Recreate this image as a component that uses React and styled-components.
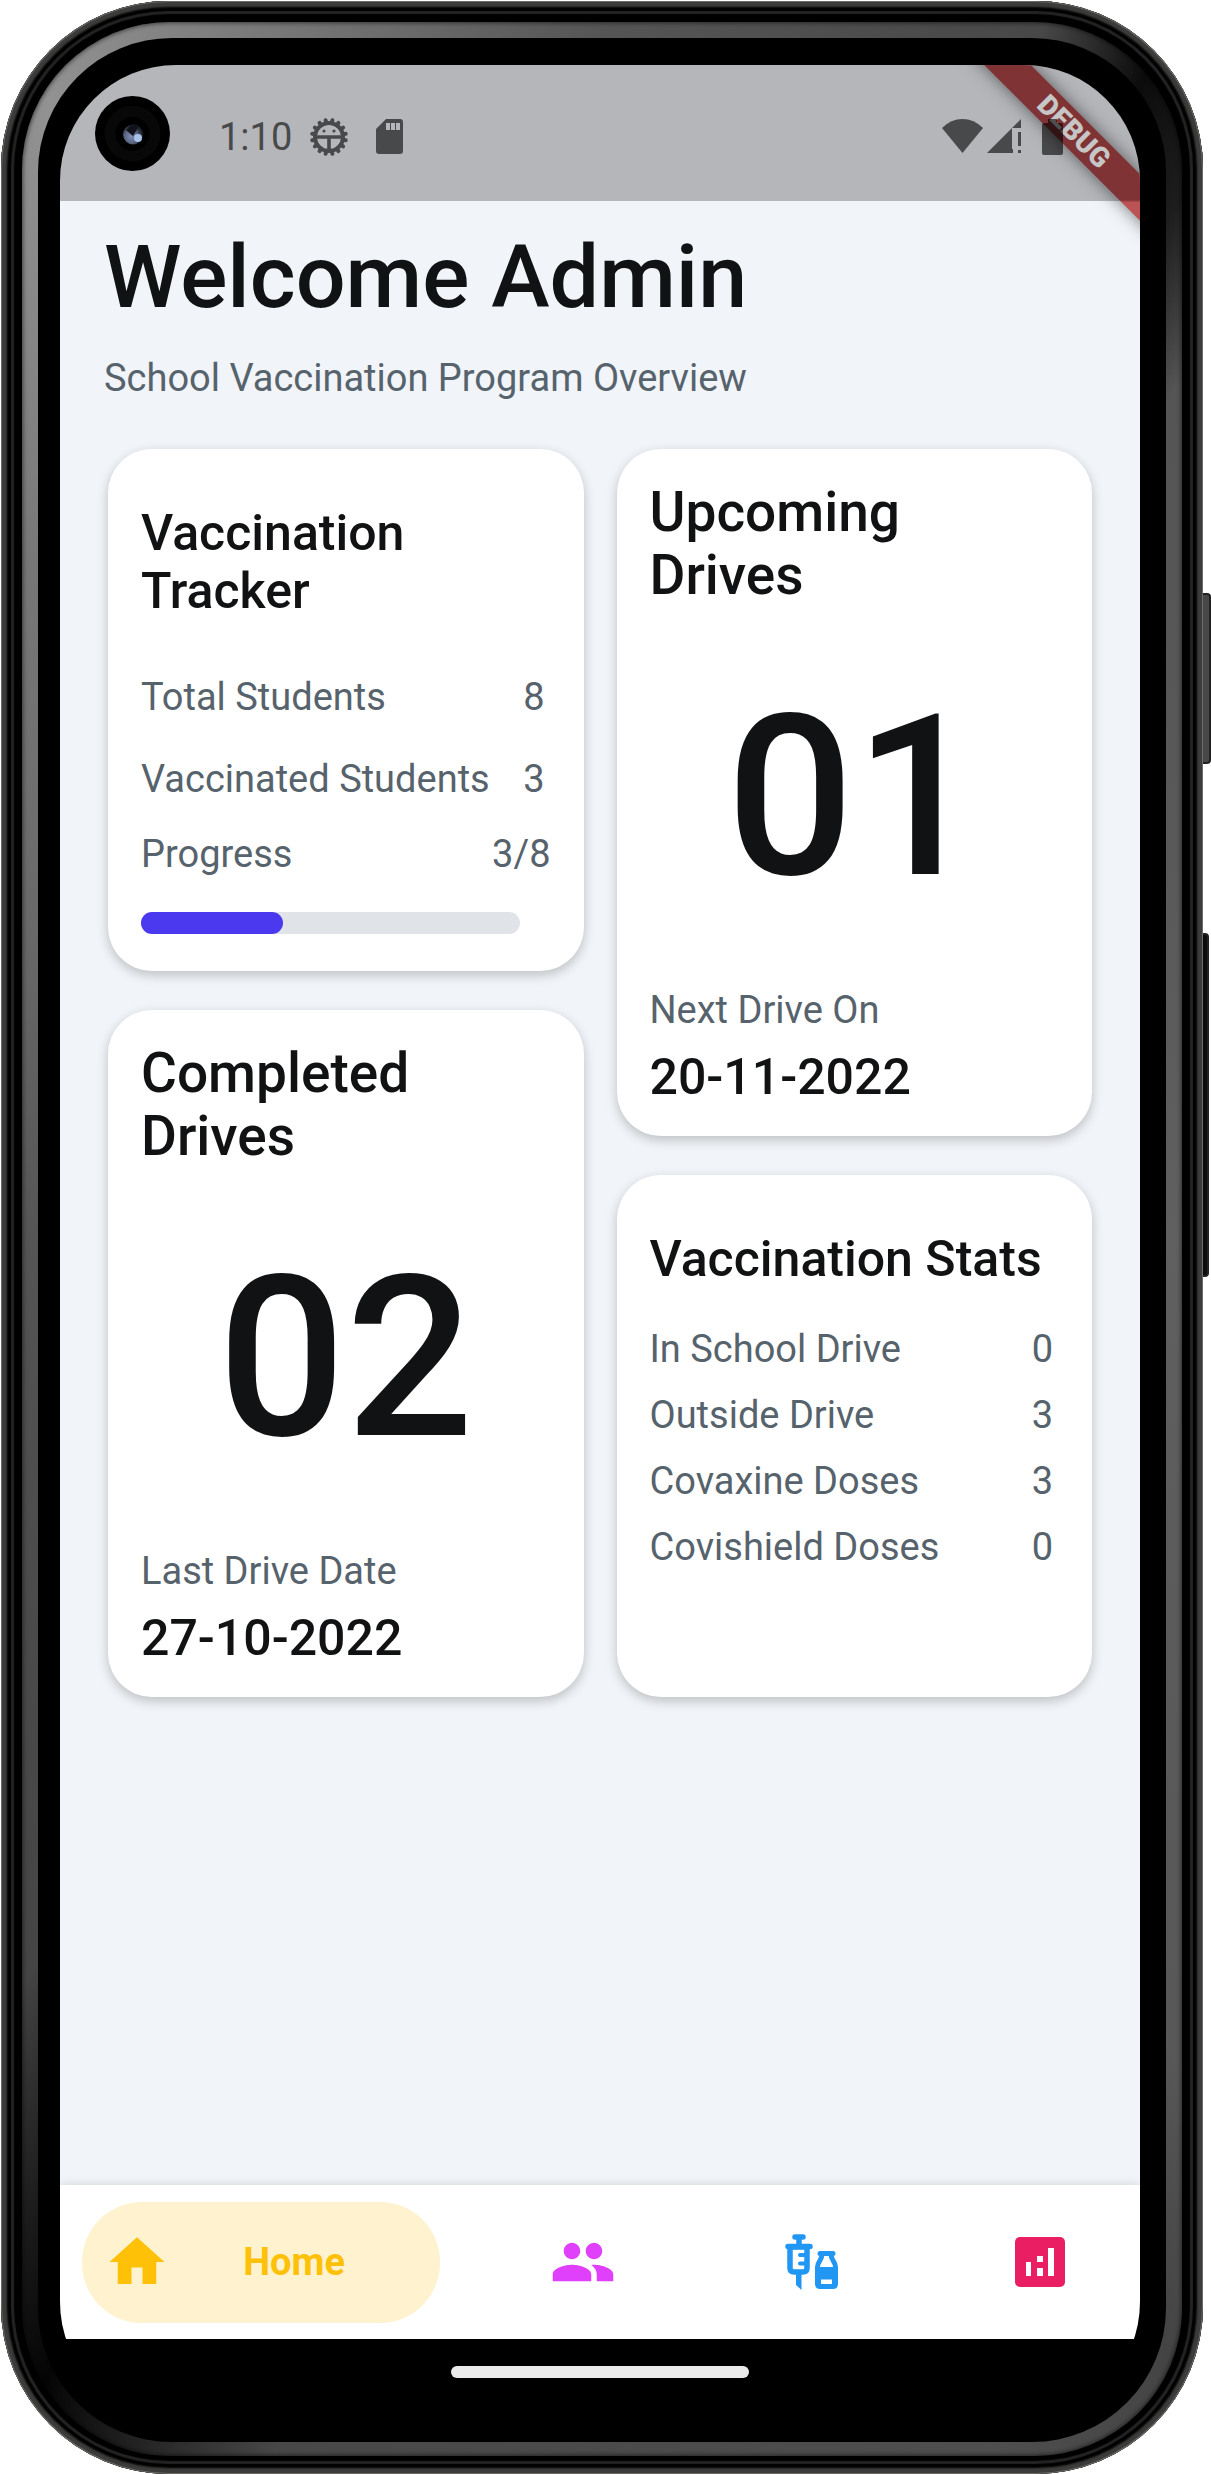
import React from 'react';
import styled, { createGlobalStyle } from 'styled-components';

const Global = createGlobalStyle`
  * { box-sizing: border-box; }
  body { margin: 0; background: #fff; font-family: Roboto, sans-serif; color: #111213; }
  h1, h2, p, dl, dd, dt { margin: 0; font-weight: 400; }
`;

const Page = styled.div`
  position: relative;
  padding: 1px 8px 0 1px;
`;
const SideKey = styled.span`
  position: absolute;
  top: ${p => p.$top}px;
  right: ${p => p.$right}px;
  width: 12px;
  height: ${p => p.$height}px;
  border-radius: 0 4px 4px 0;
  border: 2px solid #222;
  background: ${p => p.$color};
`;
const Device = styled.div`
  position: relative;
  padding: 21px 21px 18px;
  border-radius: 168px;
  background: #000;
  box-shadow: inset 0 0 0 1px #6d6c69, inset 0 0 2px 6px #3c3d3b, inset 0 0 1px 10px #000, inset 0 0 1px 13px #242425;
`;
const Rim = styled.div`
  padding: 16px 16px 14px;
  border-radius: 148px;
  background: conic-gradient(from 0deg at 50% 50%, #555 0deg, #484848 20deg, #0c0c0c 25deg, #1d1d1d 29deg, #555 34deg, #606060 90deg, #585858 145deg, #444 153deg, #4e4e4e 162deg, #484848 195deg, #050505 206deg, #1a1a1a 210deg, #454545 218deg, #555 270deg, #777 320deg, #929292 334deg, #777 345deg, #555 360deg);
  box-shadow: inset 0 0 4px 1px rgba(0, 0, 0, 0.55);
`;
const Bezel = styled.div`
  padding: 27px 26px 24px 22px;
  border-radius: 134px;
  background: #000;
`;
const Screen = styled.main`
  position: relative;
  display: flex;
  flex-direction: column;
  min-height: 2353px;
  border-radius: 116px;
  overflow: hidden;
  background: #000;
`;
const StatusBar = styled.header`
  display: flex;
  align-items: center;
  height: 136px;
  padding: 7px 77px 0 35px;
  background: #b5b6ba;
  color: #48494b;
  font-size: 38px;
  line-height: 44px;
`;
const Camera = styled.svg`
  width: 75px;
  height: 75px;
  margin: 0 49px 6px 0;
`;
const StatusIcons = styled.div`
  display: flex;
  align-items: center;
  gap: 28px;
  margin-left: 18px;
`;
const Signals = styled.div`
  position: relative;
  z-index: 1;
  display: flex;
  align-items: center;
  gap: 20px;
  margin-left: auto;
`;
const Reception = styled.div`
  display: flex;
  gap: 4px;
`;
const Ribbon = styled.div`
  position: absolute;
  top: 50px;
  right: -74px;
  width: 280px;
  height: 33px;
  transform: rotate(45deg);
  background: linear-gradient(135deg, #803335 0, #803335 81%, #bb5254 82%);
  color: #c6c6c6;
  box-shadow: 0 0 17px rgba(0, 0, 0, 0.5);
  font-size: 28px;
  font-weight: 900;
  line-height: 33px;
  text-align: center;
`;
const Content = styled.div`
  flex: 1;
  padding: 24px 48px 48px 44px;
  background: #f1f4f8;
`;
const Title = styled.h1`
  font-size: 88px;
  font-weight: 500;
  line-height: 104px;
`;
const Subtitle = styled.p`
  margin-top: 26px;
  color: #57636c;
  font-size: 38px;
  line-height: 46px;
`;
const Columns = styled.div`
  display: grid;
  grid-template-columns: 1fr 1fr;
  gap: 33px;
  margin: 48px 0 0 4px;
`;
const Column = styled.div`
  display: flex;
  flex-direction: column;
  gap: 39px;
`;
const Card = styled.section`
  display: flex;
  flex-direction: column;
  min-height: ${p => (p.$tall ? 687 : 522)}px;
  padding: ${p => (p.$tall ? 32 : 55)}px 33px 30px;
  border-radius: 44px;
  background: #fff;
  box-shadow: 0 4px 12px rgba(0, 0, 0, 0.22);
`;
const CardTitle = styled.h2`
  font-size: ${p => (p.$large ? 55 : 50)}px;
  font-weight: 500;
  line-height: ${p => (p.$large ? 63 : 58)}px;
`;
const BigNumber = styled.p`
  flex: 1;
  display: flex;
  align-items: center;
  justify-content: center;
  font-size: 225px;
  font-weight: 500;
  line-height: 264px;
`;
const Caption = styled.p`
  color: #57636c;
  font-size: 38px;
  line-height: 46px;
`;
const DateText = styled.p`
  margin-top: 15px;
  font-size: 50px;
  font-weight: 500;
  line-height: 58px;
`;
const Rows = styled.dl`
  display: flex;
  flex-direction: column;
  gap: ${p => p.$gap}px;
  margin-top: ${p => p.$top}px;
`;
const Row = styled.div`
  display: flex;
  justify-content: space-between;
  padding-right: ${p => (p.$flush ? 0 : 6)}px;
  color: #57636c;
  font-size: 38px;
  line-height: 46px;
`;
const Track = styled.div`
  height: 22px;
  margin: 35px 31px 0 0;
  border-radius: 11px;
  background: #e0e3e7;
`;
const Fill = styled.div`
  width: 37.5%;
  height: 22px;
  border-radius: 11px;
  background: #4b39ef;
`;
const NavBar = styled.nav`
  display: flex;
  align-items: center;
  justify-content: space-between;
  height: 154px;
  padding: 0 15px 0 22px;
  background: #fff;
  box-shadow: 0 0 9px rgba(0, 0, 0, 0.14);
`;
const NavButton = styled.button`
  display: flex;
  align-items: center;
  justify-content: center;
  width: 170px;
  height: 121px;
  padding: 0;
  border: 0;
  background: none;
  color: ${p => p.$color};
  cursor: pointer;
`;
const ActiveButton = styled(NavButton)`
  width: 358px;
  padding: 0 95px 0 22px;
  justify-content: space-between;
  border-radius: 60px;
  background: #fff2cf;
  font: 700 38px/44px Roboto, sans-serif;
`;
const Gesture = styled.footer`
  position: relative;
  display: flex;
  justify-content: center;
  height: 79px;
  padding-top: 27px;
  background: #000;
`;
const Handle = styled.span`
  width: 298px;
  height: 12px;
  border-radius: 6px;
  background: #ebebeb;
`;

const CameraLens = () => (
  <Camera viewBox="0 0 75 75" aria-hidden="true">
    <defs>
      <radialGradient id="lens" cx="40%" cy="60%" r="55%">
        <stop offset="0" stopColor="#7d8eb5" />
        <stop offset="0.6" stopColor="#596480" />
        <stop offset="1" stopColor="#20242e" />
      </radialGradient>
    </defs>
    <circle cx="37.500" cy="37.500" r="37.500" fill="#000" />
    <circle cx="37.500" cy="37.500" r="28" fill="#080808" />
    <circle cx="37.500" cy="38" r="17" fill="#000" />
    <circle cx="38" cy="38.500" r="10" fill="url(#lens)" />
    <path d="M31 34q8-9 13-4l-6 10z" fill="#10131b" />
    <circle cx="43" cy="42" r="4" fill="#a9c2ea" />
  </Camera>
);

const teeth = Array.from({ length: 16 }, (_, i) => i * 22.5 + 11.25);
const GearIcon = () => (
  <svg width="38" height="38" viewBox="-19 -19 38 38" fill="none" stroke="#48494b" aria-hidden="true">
    <circle r="14" strokeWidth="4" />
    {teeth.map(a => <path key={a} d="M0-14V-17" strokeWidth="4" strokeLinecap="round" transform={`rotate(${a})`} />)}
    <path d="M-14 0H14M0 0V14" strokeWidth="3.600" />
    <circle cx="-5" cy="-6" r="1.600" fill="#48494b" stroke="none" />
    <circle cx="5" cy="-6" r="1.600" fill="#48494b" stroke="none" />
  </svg>
);
const SdIcon = () => (
  <svg width="27" height="35" viewBox="0 0 27 35" fill="#48494b" aria-hidden="true">
    <path fillRule="evenodd" d="M10 0H24a3 3 0 0 1 3 3V32a3 3 0 0 1-3 3H3a3 3 0 0 1-3-3V10zM10 4v7h4V4zm5 0v7h4V4zm5 0v7h4V4z" />
  </svg>
);
const WifiIcon = () => (
  <svg width="41" height="35" viewBox="0 0 41 35" fill="#48494b" aria-hidden="true">
    <path d="M20.500 34 0 9Q9 0 20.500 0T41 9z" />
  </svg>
);
const CellIcon = () => (
  <svg width="35" height="35" viewBox="0 0 35 35" fill="#48494b" aria-hidden="true">
    <path d="M34 0V9H25v21h1v4H0zM31 13h3v14h-3zm0 18h3v3h-3z" />
  </svg>
);
const BatteryIcon = () => (
  <svg width="21" height="36" viewBox="0 0 21 36" fill="#000" fillOpacity="0.6" aria-hidden="true">
    <path d="M6 0h9v4h4a2 2 0 0 1 2 2v28a2 2 0 0 1-2 2H2a2 2 0 0 1-2-2V6a2 2 0 0 1 2-2h4z" />
  </svg>
);

const HomeIcon = () => (
  <svg width="66" height="66" viewBox="0 0 24 24" fill="currentColor" aria-hidden="true">
    <path d="M10 20v-6h4v6h5v-8h3L12 3 2 12h3v8z" />
  </svg>
);
const PeopleIcon = () => (
  <svg width="66" height="66" viewBox="0 0 24 24" fill="currentColor" aria-hidden="true">
    <path d="M16 11c1.660 0 2.990-1.340 2.990-3S17.660 5 16 5s-3 1.340-3 3 1.340 3 3 3zm-8 0c1.660 0 2.990-1.340 2.990-3S9.660 5 8 5 5 6.340 5 8s1.340 3 3 3zm0 2c-2.330 0-7 1.170-7 3.500V19h14v-2.500c0-2.330-4.670-3.500-7-3.500zm8 0c-.29 0-.62.020-.97.050 1.160.84 1.970 1.970 1.970 3.450V19h6v-2.500c0-2.330-4.670-3.500-7-3.500z" />
  </svg>
);
const VaccinesIcon = () => (
  <svg width="54" height="56" viewBox="0 0 54 56" fill="none" stroke="currentColor" aria-hidden="true">
    <path d="M10 3h8M14 3v9M3 12.500h22" strokeWidth="5.500" strokeLinecap="round" />
    <path d="M5 13v21q0 4 4 4h9q4 0 4-4V13z" strokeWidth="5.500" />
    <path d="M15 21h7M15 29.500h7" strokeWidth="4" strokeLinecap="round" />
    <path d="M11 39h5.500v17l-5.500-5z" fill="currentColor" stroke="none" />
    <path d="M35 19.500h13M37 20c0 7-4.500 7-4.500 13M46 20c0 7 4.500 7 4.500 13" strokeWidth="5" strokeLinecap="round" />
    <path fillRule="evenodd" d="M30 33h23v17q0 5-5 5H35q-5 0-5-5zM36 45.500v4.500h11v-4.500z" fill="currentColor" stroke="none" />
  </svg>
);
const StatsIcon = () => (
  <svg width="50" height="50" viewBox="0 0 50 50" aria-hidden="true">
    <rect width="50" height="50" rx="5" fill="currentColor" />
    <path d="M11 25h5v14h-5zM22 19h6v6h-6zm0 12h6v8h-6zM33 11h6v28h-6z" fill="#fff" />
  </svg>
);

const DriveCard = ({ title, count, caption, date }) => (
  <Card $tall>
    <CardTitle $large>{title[0]}<br />{title[1]}</CardTitle>
    <BigNumber>{count}</BigNumber>
    <Caption>{caption}</Caption>
    <DateText>{date}</DateText>
  </Card>
);

const stats = [
  ['In School Drive', 0],
  ['Outside Drive', 3],
  ['Covaxine Doses', 3],
  ['Covishield Doses', 0],
];

export default function App() {
  return (
    <Page>
      <Global />
      <SideKey $top={593} $right={0} $height={171} $color="#484848" />
      <SideKey $top={933} $right={2} $height={344} $color="#0c0c0c" />
      <Device>
        <Rim>
          <Bezel>
            <Screen>
              <StatusBar>
                <CameraLens />
                <span>1:10</span>
                <StatusIcons><GearIcon /><SdIcon /></StatusIcons>
                <Signals>
                  <Reception><WifiIcon /><CellIcon /></Reception>
                  <BatteryIcon />
                </Signals>
              </StatusBar>
              <Content>
                <Title>Welcome Admin</Title>
                <Subtitle>School Vaccination Program Overview</Subtitle>
                <Columns>
                  <Column>
                    <Card>
                      <CardTitle>Vaccination<br />Tracker</CardTitle>
                      <Rows $top={54} $gap={36}>
                        <Row><dt>Total Students</dt><dd>8</dd></Row>
                        <Row><dt>Vaccinated Students</dt><dd>3</dd></Row>
                      </Rows>
                      <Rows $top={29} $gap={0}>
                        <Row $flush><dt>Progress</dt><dd>3/8</dd></Row>
                      </Rows>
                      <Track role="progressbar" aria-label="Progress" aria-valuenow={3} aria-valuemax={8}><Fill /></Track>
                    </Card>
                    <DriveCard title={['Completed', 'Drives']} count="02" caption="Last Drive Date" date="27-10-2022" />
                  </Column>
                  <Column>
                    <DriveCard title={['Upcoming', 'Drives']} count="01" caption="Next Drive On" date="20-11-2022" />
                    <Card>
                      <CardTitle>Vaccination Stats</CardTitle>
                      <Rows $top={38} $gap={20}>
                        {stats.map(([label, value]) => <Row key={label}><dt>{label}</dt><dd>{value}</dd></Row>)}
                      </Rows>
                    </Card>
                  </Column>
                </Columns>
              </Content>
              <NavBar>
                <ActiveButton $color="#ffc107"><HomeIcon />Home</ActiveButton>
                <NavButton $color="#e040fb" aria-label="Students"><PeopleIcon /></NavButton>
                <NavButton $color="#2196f3" aria-label="Vaccines"><VaccinesIcon /></NavButton>
                <NavButton $color="#e91e63" aria-label="Statistics"><StatsIcon /></NavButton>
              </NavBar>
              <Gesture><Handle /></Gesture>
              <Ribbon>DEBUG</Ribbon>
            </Screen>
          </Bezel>
        </Rim>
      </Device>
    </Page>
  );
}
